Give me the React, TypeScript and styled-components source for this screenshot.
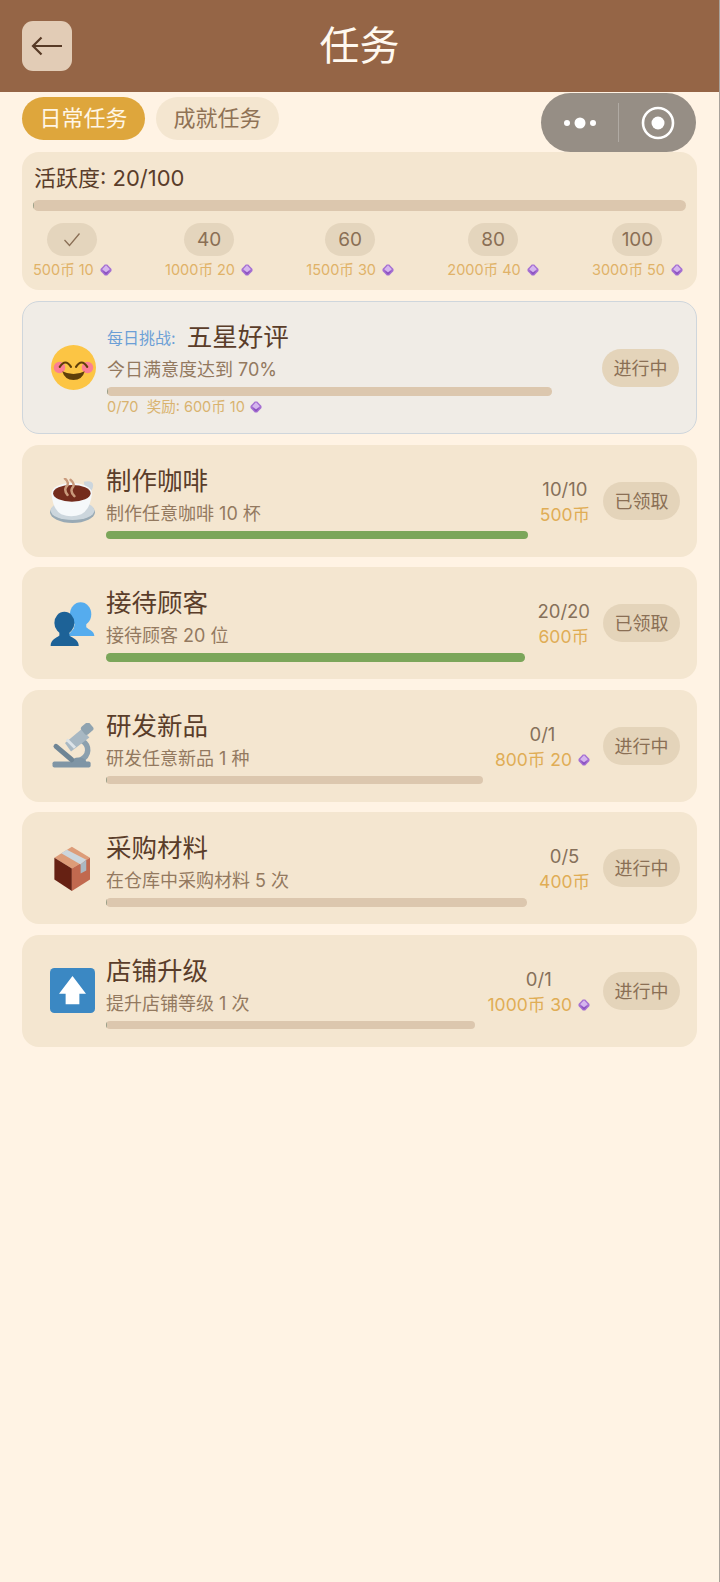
import { ReactNode } from 'react';
import styled, { createGlobalStyle } from 'styled-components';

const GlobalStyle = createGlobalStyle`
  html, body {
    margin: 0;
    padding: 0;
    background: #fff3e4;
  }
  body {
    font-family: Inter, "Noto Sans CJK SC", sans-serif;
  }
`;

const Page = styled.div`
  position: relative;
  box-sizing: border-box;
  width: 720px;
  min-height: 1582px;
  background: #fff3e4;
  border-right: 1px solid #a8a29b;
`;

const Header = styled.header`
  position: relative;
  height: 92px;
  background: #956546;
  display: flex;
  align-items: center;
  justify-content: center;
`;

const BackButton = styled.button`
  position: absolute;
  left: 22px;
  top: 21px;
  width: 50px;
  height: 50px;
  padding: 0;
  border: 0;
  border-radius: 11px;
  background: #e2ccb6;
  display: flex;
  align-items: center;
  justify-content: center;
`;

const Title = styled.h1`
  margin: 0;
  font-size: 40px;
  line-height: 50px;
  font-weight: 400;
  color: #fff9f0;
`;

const Capsule = styled.div`
  position: absolute;
  top: 93px;
  left: 541px;
  width: 155px;
  height: 59px;
  border-radius: 30px;
  background: #968e85;
  display: flex;
  align-items: center;
`;

const CapsuleCell = styled.div`
  flex: 1;
  display: flex;
  align-items: center;
  justify-content: center;
`;

const CapsuleDivider = styled.div`
  width: 1px;
  height: 39px;
  background: rgba(255, 255, 255, 0.25);
`;

const Content = styled.main`
  padding: 5px 22px 0 22px;
  display: flex;
  flex-direction: column;
`;

const Tabs = styled.div`
  display: flex;
  gap: 11px;
  margin-bottom: 12px;
`;

const Tab = styled.div<{ $active?: boolean }>`
  box-sizing: border-box;
  width: 123px;
  height: 43px;
  padding-bottom: 5px;
  border-radius: 22px;
  display: flex;
  align-items: center;
  justify-content: center;
  font-size: 22px;
  background: ${(p) => (p.$active ? '#dea63c' : '#f4e6d0')};
  color: ${(p) => (p.$active ? '#fff6e6' : '#8f7255')};
`;

const ActivityCard = styled.section`
  box-sizing: border-box;
  height: 138px;
  border-radius: 17px;
  background: #f4e6d0;
  padding: 11px 11px 0;
  margin-bottom: 11px;
`;

const ActivityTitle = styled.div`
  font-size: 22px;
  line-height: 30px;
  padding-left: 1px;
  color: #5a3d2a;
  margin-bottom: 7px;
`;

const Track = styled.div<{ $h: number }>`
  height: ${(p) => p.$h}px;
  border-radius: ${(p) => p.$h / 2}px;
  background: #dcc7ae;
  overflow: hidden;
`;

const Fill = styled.div<{ $done: boolean }>`
  height: 100%;
  min-width: 1px;
  background: ${(p) => (p.$done ? '#7ba65a' : '#9aa088')};
`;

const Milestones = styled.div`
  display: flex;
  justify-content: space-between;
  margin-top: 12px;
  padding-right: 3px;
`;

const Milestone = styled.div`
  display: flex;
  flex-direction: column;
  align-items: center;
`;

const MilestoneBadge = styled.div`
  width: 50px;
  height: 33px;
  border-radius: 17px;
  background: #e4d5bd;
  color: #8a6f55;
  font-size: 19px;
  display: flex;
  align-items: center;
  justify-content: center;
`;

const MilestoneReward = styled.div`
  margin-top: 4px;
  font-size: 14.5px;
  line-height: 20px;
  color: #e0b268;
  display: flex;
  align-items: center;
  gap: 6px;
  white-space: nowrap;
`;

const TaskList = styled.div`
  display: flex;
  flex-direction: column;
  gap: 10.5px;
`;

const TaskCard = styled.article<{ $challenge?: boolean }>`
  box-sizing: border-box;
  height: ${(p) => (p.$challenge ? '133px' : '112px')};
  border-radius: 17px;
  display: flex;
  align-items: center;
  padding: 0 17px 0 28px;
  background: ${(p) => (p.$challenge ? '#f0ece6' : '#f4e6d0')};
  border: ${(p) => (p.$challenge ? '1.5px solid #cfd6dc' : '0')};
`;

const TaskIcon = styled.div`
  flex: none;
  width: 45px;
  height: 45px;
  margin-right: 11px;
`;

const TaskMain = styled.div<{ $challenge?: boolean }>`
  flex: 1;
  min-width: 0;
  padding-top: 2px;
  margin-right: ${(p) => (p.$challenge ? '37px' : '0')};
`;

const TitleRow = styled.div`
  display: flex;
  align-items: center;
  gap: 11px;
  height: 34px;
`;

const ChallengeTag = styled.span`
  font-size: 16px;
  color: #6c9fd6;
`;

const TaskName = styled.span`
  font-size: 25.5px;
  line-height: 34px;
  color: #5a3d2a;
`;

const TaskDesc = styled.div`
  margin-top: 3px;
  margin-bottom: 4px;
  font-size: 18px;
  line-height: 26px;
  color: #93795f;
`;

const ChallengeMeta = styled.div`
  margin-top: 1px;
  font-size: 14.5px;
  line-height: 20px;
  color: #d9b36f;
  display: flex;
  align-items: center;
  gap: 5px;
  white-space: pre;
`;

const RewardColumn = styled.div`
  flex: none;
  margin-left: 12px;
  padding-top: 2px;
  display: flex;
  flex-direction: column;
  align-items: center;
`;

const Count = styled.div`
  font-size: 18.5px;
  line-height: 26px;
  color: #86705a;
`;

const Reward = styled.div`
  font-size: 17.5px;
  line-height: 26px;
  color: #e0ad55;
  display: flex;
  align-items: center;
  gap: 6px;
  white-space: nowrap;
`;

const StatusPill = styled.div`
  box-sizing: border-box;
  flex: none;
  margin-left: 13px;
  width: 77px;
  height: 38px;
  padding-bottom: 2px;
  border-radius: 19px;
  background: #e4d4ba;
  color: #8a6f55;
  font-size: 18px;
  display: flex;
  align-items: center;
  justify-content: center;
`;

const Gem = () => (
  <svg width="12" height="12" viewBox="0 0 12 12">
    <polygon points="4.8,0.5 7.2,0.5 11.5,5 11.5,7 7.2,11.5 4.8,11.5 0.5,7 0.5,5" fill="#a56fd2" />
    <polygon points="6,1.2 9.8,5.2 6,8.2 2.2,5.2" fill="#d5b6ee" />
    <polygon points="2.2,6.6 6,8.6 9.8,6.6 6,10.8" fill="#8a52bf" />
  </svg>
);

const SmileIcon = () => (
  <svg width="45" height="45" viewBox="0 0 36 36">
    <circle cx="18" cy="18" r="18" fill="#fcc544" />
    <circle cx="6.8" cy="18" r="4.6" fill="#fb7f93" />
    <circle cx="29.2" cy="18" r="4.6" fill="#fb7f93" />
    <path d="M7 17.5 Q11.5 10.5 16 17.5 M20 17.5 Q24.5 10.5 29 17.5" fill="none" stroke="#5f3f0a" strokeWidth="1.7" strokeLinecap="round" />
    <path d="M9 21 Q18 25.5 27 21 Q25 28 18 28 Q11 28 9 21Z" fill="#5f3f0a" />
  </svg>
);

const CoffeeIcon = () => (
  <svg width="45" height="45" viewBox="0 0 36 36">
    <ellipse cx="18" cy="27.4" rx="18" ry="8.6" fill="#99aab5" />
    <ellipse cx="18" cy="26" rx="17.5" ry="7.6" fill="#ccd6dd" />
    <path d="M27 3 Q34.5 1.5 34.5 6 Q34.5 10.5 29 13Z" fill="#ccd6dd" />
    <path d="M1.2 12 Q2 25 9 29 Q17 32 25 29 Q32.5 25 33.5 12Z" fill="#f5f8fa" />
    <ellipse cx="17.4" cy="12" rx="16.2" ry="8" fill="#f5f8fa" />
    <ellipse cx="17.5" cy="12.2" rx="15" ry="6.7" fill="#742c1d" />
    <path d="M12 0.5 Q16 4 13 7 Q11 10 14 13.5 M16.5 1.5 Q20.5 5 17.8 8 Q16 11 19.5 14.5" fill="none" stroke="#c99a7c" strokeWidth="2" strokeLinecap="round" />
  </svg>
);

const BustsIcon = () => (
  <svg width="45" height="45" viewBox="0 0 36 36">
    <ellipse cx="24.5" cy="10.5" rx="8.5" ry="9.5" fill="#55acee" />
    <path d="M20 17 L29 17 L29 21 C31 23 35 23.5 35.5 28 L14 28 L19 22Z" fill="#55acee" />
    <ellipse cx="11.5" cy="17.5" rx="8" ry="9" fill="#1d6297" />
    <path d="M7.5 24 L15.5 24 L15.5 27.5 C18 29.5 23 30.5 23 36 L0.5 36 C0.5 30.5 5 29.5 7.5 27.5Z" fill="#1d6297" />
  </svg>
);

const MicroscopeIcon = () => (
  <svg width="45" height="45" viewBox="0 0 36 36">
    <path d="M25.4 14 C32 18 32 26 24 30" fill="none" stroke="#8ba0ae" strokeWidth="4.4" />
    <ellipse cx="23" cy="31" rx="6" ry="3.4" fill="#7f95a5" />
    <rect x="2" y="30.7" width="30.5" height="4.8" rx="1.5" fill="#7f95a5" />
    <line x1="4.8" y1="18.7" x2="17.4" y2="29.4" stroke="#6f8595" strokeWidth="4" strokeLinecap="round" />
    <polygon points="12,16 25.4,4.8 31.5,11.5 16.8,22.7" fill="#a8b8c3" />
    <line x1="13.4" y1="13.2" x2="20" y2="19.8" stroke="#dce3e8" strokeWidth="2.4" />
    <rect x="25.5" y="0.5" width="8.5" height="8" rx="2" fill="#8fa3b0" transform="rotate(-40 29.7 4.5)" />
  </svg>
);

const BoxIcon = () => (
  <svg width="45" height="45" viewBox="0 0 36 36">
    <polygon points="17.5,0.5 32,9.3 17.5,18 3.5,9.3" fill="#dd9c78" />
    <polygon points="3.5,9.3 17.5,18 17.5,36 3.5,26.7" fill="#662113" />
    <polygon points="32,9.3 32,26.7 17.5,36 17.5,18" fill="#c1694f" />
    <polygon points="9,5.8 13.5,3 29,11 24.5,14.7" fill="#ccd6dd" />
    <polygon points="24.5,14.7 29,11 29,19.5 24.5,22" fill="#aab8c2" />
  </svg>
);

const UpgradeIcon = () => (
  <svg width="45" height="45" viewBox="0 0 36 36">
    <rect width="36" height="36" rx="3.5" fill="#3b88c3" />
    <polygon points="18,6.4 28.8,20.5 23.5,20.5 23.5,29 12.5,29 12.5,20.5 7.2,20.5" fill="#ffffff" />
  </svg>
);

const milestones: { label: ReactNode; coins: number; gems: number }[] = [
  {
    label: (
      <svg width="18" height="15" viewBox="0 0 18 15">
        <polyline points="1.5,8 6.5,13.5 16.5,1.5" fill="none" stroke="#8a6f55" strokeWidth="1.3" />
      </svg>
    ),
    coins: 500,
    gems: 10,
  },
  { label: '40', coins: 1000, gems: 20 },
  { label: '60', coins: 1500, gems: 30 },
  { label: '80', coins: 2000, gems: 40 },
  { label: '100', coins: 3000, gems: 50 },
];

const tasks = [
  { name: '制作咖啡', desc: '制作任意咖啡 10 杯', count: '10/10', coins: 500, gems: 0, status: '已领取', done: true, icon: <CoffeeIcon /> },
  { name: '接待顾客', desc: '接待顾客 20 位', count: '20/20', coins: 600, gems: 0, status: '已领取', done: true, icon: <BustsIcon /> },
  { name: '研发新品', desc: '研发任意新品 1 种', count: '0/1', coins: 800, gems: 20, status: '进行中', done: false, icon: <MicroscopeIcon /> },
  { name: '采购材料', desc: '在仓库中采购材料 5 次', count: '0/5', coins: 400, gems: 0, status: '进行中', done: false, icon: <BoxIcon /> },
  { name: '店铺升级', desc: '提升店铺等级 1 次', count: '0/1', coins: 1000, gems: 30, status: '进行中', done: false, icon: <UpgradeIcon /> },
];

export default function App() {
  return (
    <Page>
      <GlobalStyle />
      <Header>
        <BackButton aria-label="返回">
          <svg width="32" height="20" viewBox="0 0 32 20">
            <path d="M31 10 H2 M10.5 1.5 L2 10 L10.5 18.5" fill="none" stroke="#573a26" strokeWidth="2.2" />
          </svg>
        </BackButton>
        <Title>任务</Title>
      </Header>

      <Capsule>
        <CapsuleCell>
          <svg width="34" height="12" viewBox="0 0 34 12">
            <circle cx="4" cy="6" r="3" fill="#fff" />
            <circle cx="17" cy="6" r="5.5" fill="#fff" />
            <circle cx="30" cy="6" r="3" fill="#fff" />
          </svg>
        </CapsuleCell>
        <CapsuleDivider />
        <CapsuleCell>
          <svg width="34" height="34" viewBox="0 0 34 34">
            <circle cx="17" cy="17" r="15" fill="none" stroke="#fff" strokeWidth="2.6" />
            <circle cx="17" cy="17" r="6.5" fill="#fff" />
          </svg>
        </CapsuleCell>
      </Capsule>

      <Content>
        <Tabs>
          <Tab $active>日常任务</Tab>
          <Tab>成就任务</Tab>
        </Tabs>

        <ActivityCard>
          <ActivityTitle>活跃度: 20/100</ActivityTitle>
          <Track $h={11}>
            <Fill $done={false} style={{ width: '0%' }} />
          </Track>
          <Milestones>
            {milestones.map((m) => (
              <Milestone key={m.coins}>
                <MilestoneBadge>{m.label}</MilestoneBadge>
                <MilestoneReward>
                  {m.coins}币 {m.gems}
                  <Gem />
                </MilestoneReward>
              </Milestone>
            ))}
          </Milestones>
        </ActivityCard>

        <TaskList>
          <TaskCard $challenge>
            <TaskIcon>
              <SmileIcon />
            </TaskIcon>
            <TaskMain $challenge>
              <TitleRow>
                <ChallengeTag>每日挑战:</ChallengeTag>
                <TaskName>五星好评</TaskName>
              </TitleRow>
              <TaskDesc>今日满意度达到 70%</TaskDesc>
              <Track $h={8.5}>
                <Fill $done={false} style={{ width: '0%' }} />
              </Track>
              <ChallengeMeta>
                0/70{'  '}奖励: 600币 10
                <Gem />
              </ChallengeMeta>
            </TaskMain>
            <StatusPill>进行中</StatusPill>
          </TaskCard>

          {tasks.map((t) => (
            <TaskCard key={t.name}>
              <TaskIcon>{t.icon}</TaskIcon>
              <TaskMain>
                <TitleRow>
                  <TaskName>{t.name}</TaskName>
                </TitleRow>
                <TaskDesc>{t.desc}</TaskDesc>
                <Track $h={8.5}>
                  <Fill $done={t.done} style={{ width: t.done ? '100%' : '0%' }} />
                </Track>
              </TaskMain>
              <RewardColumn>
                <Count>{t.count}</Count>
                <Reward>
                  {t.coins}币{t.gems > 0 && ` ${t.gems}`}
                  {t.gems > 0 && <Gem />}
                </Reward>
              </RewardColumn>
              <StatusPill>{t.status}</StatusPill>
            </TaskCard>
          ))}
        </TaskList>
      </Content>
    </Page>
  );
}
